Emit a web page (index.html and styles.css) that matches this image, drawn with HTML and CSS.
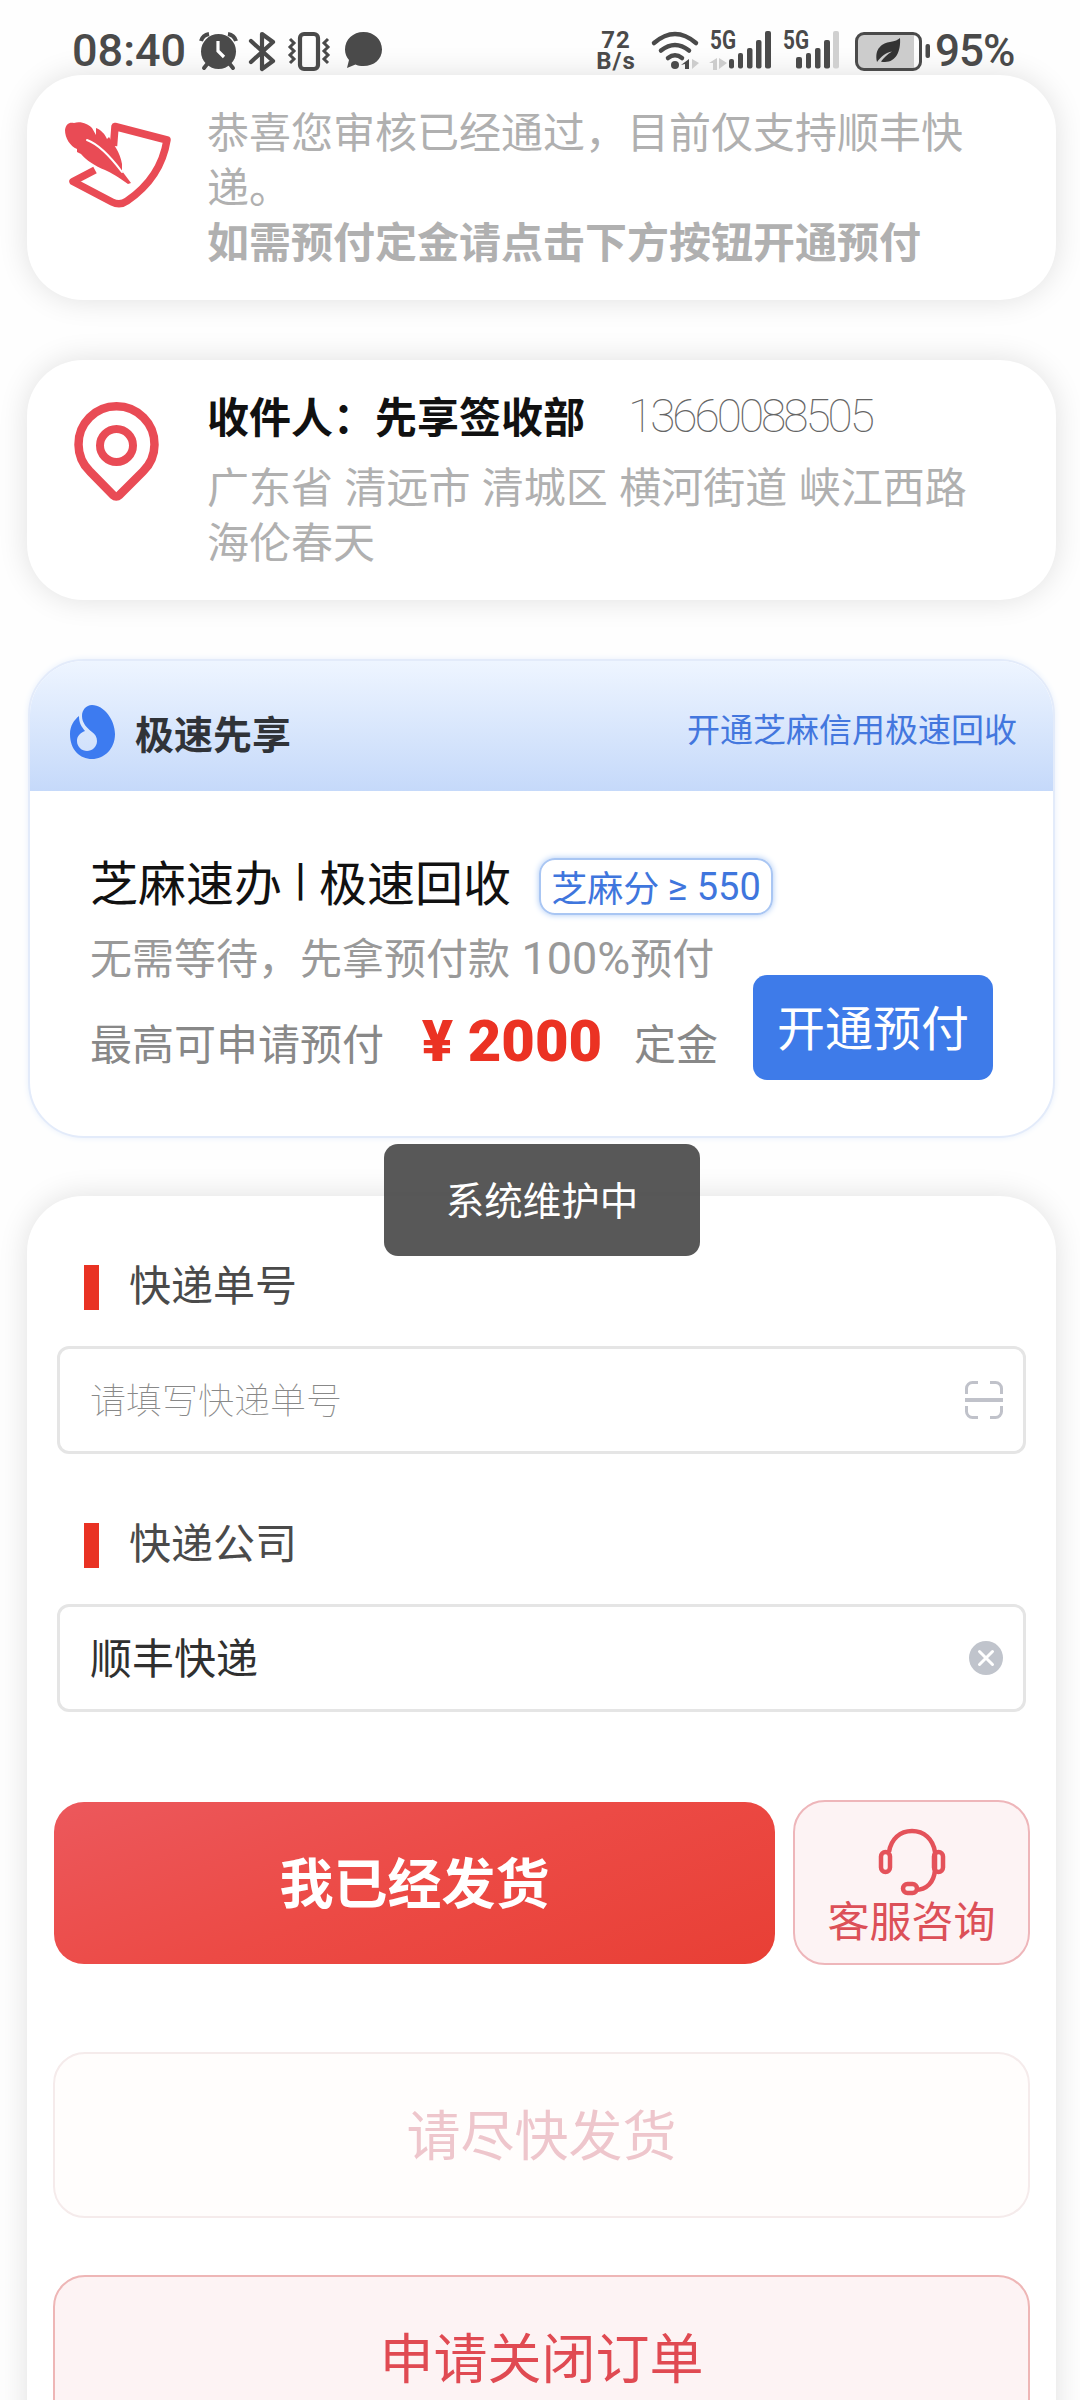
FILE: index.html
```html
<!DOCTYPE html>
<html lang="zh-CN">
<head>
<meta charset="utf-8">
<title>极速先享</title>
<link rel="stylesheet" href="styles.css">
</head>
<body>
<div class="screen">
  <header class="status">
    <div class="status-left">
      <span class="clock">08:40</span>
      <svg class="st-alarm" width="38" height="40" viewBox="200 32 38 40"><circle cx="218.500" cy="52.500" r="17.500" fill="#4a4a4a"/><path d="M201 42a10 10 0 0 1 8-7M236 42a10 10 0 0 0-8-7" fill="none" stroke="#4a4a4a" stroke-width="4"/><path d="M208 64l-4 5M229 64l4 5" stroke="#4a4a4a" stroke-width="4" stroke-linecap="round"/><path d="M218 42v10l6 6" fill="none" stroke="#fff" stroke-width="3.200"/></svg>
      <svg class="st-bt" width="28" height="40" viewBox="249 32 28 40"><path d="M251 42l22 20-11 8V35l11 8-22 20" fill="none" stroke="#4a4a4a" stroke-width="4.200" stroke-linejoin="round" stroke-linecap="round"/></svg>
      <svg class="st-vib" width="44" height="40" viewBox="287 32 44 40"><rect x="300" y="35" width="18" height="35" rx="4" fill="none" stroke="#4a4a4a" stroke-width="4.200"/><path d="M290 40l4 4-4 4 4 4-4 4 4 4-4 4M328 40l-4 4 4 4-4 4 4 4-4 4 4 4" fill="none" stroke="#4a4a4a" stroke-width="3"/></svg>
      <svg class="st-chat" width="38" height="40" viewBox="345 32 38 40"><path d="M363.500 33c10.500 0 18.500 7.500 18.500 17.500S374 67 363.500 67c-3 0-6-.5-8-1.500L347 69l2-8c-2.500-3-4-6.500-4-10.500C345 40.500 353 33 363.500 33z" fill="#4a4a4a"/></svg>
    </div>
    <div class="status-right">
      <div class="speed"><span>72</span><span>B/s</span></div>
      <svg class="st-wifi" width="50" height="40" viewBox="650 31 50 40"><g fill="none" stroke="#4a4a4a" stroke-width="4.500" stroke-linecap="round"><path d="M654 43q21-18 42 0M661 50.500q14-11 28 0M668 58q7-5.500 14 0"/></g><circle cx="675" cy="65" r="4" fill="#4a4a4a"/><path d="M681 65l8-6v10h-4v-5z" fill="#4a4a4a"/><path d="M692 59v10l7-6z" fill="#ccc"/></svg>
      <svg class="st-sig" width="63" height="40" viewBox="709 32 63 40"><path d="M709 64l8-5v12h-4v-7zM719 59v11l8-6z" fill="#ccc"/><g fill="#4a4a4a"><rect x="729" y="60" width="5" height="9.500" rx="2"/><rect x="738" y="54" width="5" height="15.500" rx="2"/><rect x="747" y="49" width="5.500" height="20.500" rx="2"/><rect x="756" y="41" width="5.500" height="28.500" rx="2"/><rect x="765" y="32" width="6" height="37.500" rx="2"/></g><text x="710" y="50" class="gen" textLength="26" lengthAdjust="spacingAndGlyphs">5G</text></svg>
      <svg class="st-sig2" width="57" height="40" viewBox="783 32 57 40"><g fill="#4a4a4a"><rect x="796" y="58" width="6" height="11.500" rx="2"/><rect x="806" y="54" width="5" height="15.500" rx="2"/><rect x="815" y="49" width="5.500" height="20.500" rx="2"/><rect x="824" y="41" width="6" height="28.500" rx="2"/></g><rect x="833" y="32" width="6" height="37.500" rx="2" fill="#d0d0d0"/><text x="783" y="50" class="gen" textLength="26" lengthAdjust="spacingAndGlyphs">5G</text></svg>
      <svg class="st-bat" width="76" height="40" viewBox="854 31 76 40"><path d="M863 34h51v34h-51a6 6 0 0 1-6-6V40a6 6 0 0 1 6-6z" fill="#ccc"/><rect x="856.500" y="33.500" width="64" height="36" rx="7.500" fill="none" stroke="#4a4a4a" stroke-width="3"/><rect x="925.500" y="44" width="4.500" height="14" rx="2" fill="#4a4a4a"/><path d="M877 62c-3-14 6-19 13-20 5-1 8-2 10-4 1 13-4 24-15 24-2 0-3 0-4-.6 3-4 6-7 11-10-6 1-11 5-15 10.600z" fill="#333"/></svg>
      <span class="pct">95%</span>
    </div>
  </header>

  <section class="card notice">
    <svg class="ic-quill" width="108" height="90" viewBox="0 0 108 90"><path d="M31 50L9 61.500l39 20.500q8 4 15-1c22-15 36-36 40-61L51 6.500 49.500 26" fill="none" stroke="#e94b55" stroke-width="7.500" stroke-linejoin="round"/><path d="M1 10C2 4 5 2 10 3c7-2 14 1 18 5l4 7V8c5 2 9 6 11 11l2-2 7 11c3 5 5 10 6 16v7c3 4 6 8 9 12l-3 1C54 57 48 53 41 50 31 46 22 40 17 34l-4-2v-3C6 26 1 18 1 10z" fill="#e94b55"/><path d="M23 20c11 4 23 16 35 32" stroke="#fff" stroke-width="2" fill="none" stroke-linecap="round"/></svg>
    <p class="notice-text">恭喜您审核已经通过，目前仅支持顺丰快递。<b>如需预付定金请点击下方按钮开通预付</b></p>
  </section>

  <section class="card address">
    <svg class="ic-pin" width="88" height="102" viewBox="0 0 88 102"><path d="M46 94.500a4 4 0 0 1-5.500 0L17 70.500a38 38 0 1 1 53 0z" fill="none" stroke="#e94b55" stroke-width="8.500" stroke-linejoin="round"/><circle cx="43.500" cy="44.500" r="16.500" fill="none" stroke="#e94b55" stroke-width="8"/></svg>
    <div class="address-body">
      <div class="person"><b>收件人：先享签收部</b><span class="phone">13660088505</span></div>
      <p class="address-text">广东省 清远市 清城区 横河街道 峡江西路海伦春天</p>
    </div>
  </section>

  <section class="promo">
    <div class="promo-head">
      <svg class="ic-drop" width="45" height="54" viewBox="0 0 45 54"><path d="M22 0c12 0 23 15 23 29 0 15-11 25-23 25S0 45 0 29c0-8 4-14 9-18 0 7 2 10 6 15-5 2-8 5-8 10 0 6 5 10 10 10s10-4 10-10c0-4-2-7-5-9-5-4-10-9-10-16 0-6 4-11 10-11z" fill="#3d7bf0"/></svg>
      <span class="promo-name">极速先享</span>
      <span class="promo-link">开通芝麻信用极速回收</span>
    </div>
    <div class="promo-body">
      <div class="promo-title"><span>芝麻速办</span><span class="bar">|</span><span>极速回收</span><span class="badge">芝麻分 <i>≥ 550</i></span></div>
      <div class="promo-row">
        <div class="promo-lines">
          <div class="line-wait">无需等待，先拿预付款 <i>100%</i>预付</div>
          <div class="line-max"><span>最高可申请预付</span><b>¥ 2000</b><span>定金</span></div>
        </div>
        <button class="btn-open">开通预付</button>
      </div>
    </div>
  </section>

  <section class="card form">
    <h2 class="label">快递单号</h2>
    <div class="input"><span class="placeholder">请填写快递单号</span>
      <svg width="38" height="38" viewBox="0 0 38 38" fill="none" stroke="#c0c2ca" stroke-width="3"><path d="M1.500 13V7.500a6 6 0 0 1 6-6H13M25 1.500h5.500a6 6 0 0 1 6 6V13M36.500 25v5.500a6 6 0 0 1-6 6H25M13 36.500H7.500a6 6 0 0 1-6-6V25"/><path d="M0 19h38" stroke-width="4"/></svg>
    </div>
    <h2 class="label second">快递公司</h2>
    <div class="input"><span>顺丰快递</span>
      <svg width="34" height="34" viewBox="0 0 34 34"><circle cx="17" cy="17" r="17" fill="#c0c4cc"/><path d="M10.500 10.500l13 13M23.500 10.500l-13 13" stroke="#fff" stroke-width="3" stroke-linecap="round"/></svg>
    </div>
    <div class="actions">
      <button class="btn-sent">我已经发货</button>
      <button class="btn-service">
        <svg width="66" height="66" viewBox="0 0 66 66" fill="none" stroke="#e4525a" stroke-width="4.500"><path d="M10 23C12 10 21 2 33 2s21 8 23 21v18c-1 12-8 20-20 20"/><rect x="2" y="23" width="9" height="20" rx="4.500"/><rect x="55" y="23" width="9" height="20" rx="4.500"/><rect x="24" y="55" width="14" height="9" rx="4.500"/></svg>
        <span>客服咨询</span>
      </button>
    </div>
    <button class="btn-wide muted">请尽快发货</button>
    <button class="btn-wide close">申请关闭订单</button>
  </section>

  <div class="toast">系统维护中</div>
</div>
</body>
</html>
```

FILE: styles.css
```css
* { box-sizing: border-box; margin: 0; padding: 0; }
html, body { height: 2400px; overflow: hidden; background: #fff; }
body { font-family: "Noto Sans CJK SC", sans-serif; color: #111; }
button { border: 0; font-family: inherit; display: flex; align-items: center; justify-content: center; white-space: nowrap; }
i { font-style: normal; font-family: Roboto, "Noto Sans CJK SC", sans-serif; }
svg { display: block; flex: none; overflow: visible; }

.screen { position: relative; width: 1080px; height: 2400px; overflow: hidden; background: #fefefe; }

.status { height: 75px; padding: 31px 63px 0 72px; display: flex; justify-content: space-between; align-items: flex-start; font-family: Roboto, sans-serif; color: #4a4a4a; position: relative; z-index: 1; }
.status-left, .status-right { display: flex; height: 40px; align-items: center; }
.clock { font-size: 45px; font-weight: 500; width: 128px; line-height: 42px; }
.st-bt { margin-left: 11px; }
.st-vib { margin-left: 10px; }
.st-chat { margin-left: 14px; }
.speed { width: 40px; display: flex; flex-direction: column; align-items: center; font-size: 24px; font-weight: 700; line-height: 21px; letter-spacing: 1px; }
.st-wifi { margin-left: 14px; }
.st-sig { margin-left: 9px; }
.st-sig2 { margin-left: 11px; }
.st-bat { margin-left: 14px; }
.pct { width: 87px; padding-left: 5px; font-size: 44px; font-weight: 500; line-height: 42px; letter-spacing: -1px; white-space: nowrap; }
.gen { font: 700 25px Roboto, sans-serif; fill: #4a4a4a; }

.card { margin: 0 24px 0 27px; background: #fff; border-radius: 56px; box-shadow: 0 0 30px rgba(0, 0, 0, .12); }

.notice { height: 225px; padding: 27px 60px 0 37px; display: flex; }
.ic-quill { margin-top: 18px; }
.notice-text { margin-left: 35px; width: 790px; font-size: 42px; line-height: 55px; color: #b0b0b0; }
.notice-text b { display: block; }

.address { margin-top: 60px; height: 240px; padding: 27px 60px 0 46px; display: flex; }
.ic-pin { margin-top: 14px; }
.address-body { margin-left: 46px; width: 790px; }
.person { display: flex; align-items: center; height: 55px; font-size: 42px; white-space: nowrap; }
.phone { margin: 4px 0 0 43px; font: 100 46px/55px Roboto, sans-serif; letter-spacing: -3px; color: #666; }
.address-text { margin-top: 15px; font-size: 42px; line-height: 55px; word-spacing: 2px; color: #b0b0b0; }

.promo { margin: 59px 25px 0 28px; height: 479px; border: 2px solid #e3ebfa; border-radius: 56px; background: #fff; overflow: hidden; box-shadow: 0 0 6px #e8f0fc; }
.promo-head { height: 130px; padding: 0 36px 0 40px; display: flex; align-items: center; background: linear-gradient(#eef5ff, #c5d9fa); }
.ic-drop { margin-top: 12px; }
.promo-name { margin: 12px 0 0 20px; font-size: 39px; font-weight: 700; color: #303338; }
.promo-link { margin: 4px 0 0 auto; font-size: 33px; color: #4377de; }
.promo-body { padding: 54px 60px 0 60px; }
.promo-title { display: flex; align-items: center; height: 70px; font-size: 48px; color: #111; white-space: nowrap; }
.bar { width: 37px; text-align: center; font: 500 44px/48px Roboto, sans-serif; }
.badge { margin: 12px 0 0 28px; width: 234px; height: 57px; display: flex; align-items: center; justify-content: center; white-space: pre; font-size: 36px; line-height: 50px; color: #3f76dd; border: 2px solid #a9c6f3; border-radius: 16px; box-shadow: 0 0 6px #a9c8f5; }
.badge i { margin-top: 2px; font-size: 38px; }
.promo-row { display: flex; justify-content: space-between; }
.promo-lines { font-size: 42px; white-space: nowrap; }
.line-wait { margin-top: 11px; line-height: 60px; word-spacing: 2px; color: #999; }
.line-wait i { font-size: 45px; line-height: 1; }
.line-max { margin-top: 21px; display: flex; align-items: center; line-height: 70px; color: #888; }
.line-max b { width: 250px; padding: 0 0 3px 6px; text-align: center; font: 900 58px/66px Roboto, sans-serif; color: #eb3223; }
.btn-open { margin-top: 60px; width: 240px; height: 105px; padding-bottom: 5px; border-radius: 14px; background: #3e7be9; color: #fff; font-size: 48px; }

.form { margin-top: 58px; height: 1300px; padding: 57px 26px 0 26px; }
.label { margin-left: 31px; height: 66px; padding-bottom: 8px; display: flex; align-items: center; font-size: 42px; font-weight: 400; color: #4a4a4a; }
.label::before { content: ""; width: 15px; height: 45px; margin: 10px 30px 0 0; background: #e93223; }
.label.second { margin-top: 57px; }
.input { margin: 27px 4px 0; height: 108px; padding: 0 20px 0 30px; display: flex; align-items: center; justify-content: space-between; border: 3px solid #e5e5e5; border-radius: 12px; font-size: 42px; color: #303030; }
.input span { padding-bottom: 5px; }
.input .placeholder { padding-bottom: 4px; font-size: 36px; font-weight: 100; color: #888; }
.actions { margin-top: 88px; display: flex; align-items: center; justify-content: space-between; }
.btn-sent { width: 721px; height: 162px; padding-bottom: 4px; border-radius: 30px; margin-left: 1px; background: linear-gradient(160deg, #ec585c, #ec4a45 50%, #e83f35); color: #fff; font-size: 54px; font-weight: 700; }
.btn-service { width: 237px; height: 165px; padding-top: 7px; border-radius: 32px; flex-direction: column; border: 2px solid #eeb6ba; background: #fdf3f4; color: #dc5058; font-size: 42px; line-height: 48px; }
.btn-wide { width: 977px; height: 166px; padding-bottom: 5px; border-radius: 32px; font-size: 54px; }
.muted { margin-top: 87px; background: #fffdfc; border: 2px solid #f5ebeb; color: #eec6cc; }
.close { margin-top: 57px; background: #fdf3f4; border: 2px solid #eeb6b6; color: #e04a52; }

.toast { position: absolute; left: 384px; top: 1144px; width: 316px; height: 112px; border-radius: 14px; background: rgba(75, 75, 75, .93); color: #fff; font-size: 38.500px; line-height: 108px; text-align: center; }
```
